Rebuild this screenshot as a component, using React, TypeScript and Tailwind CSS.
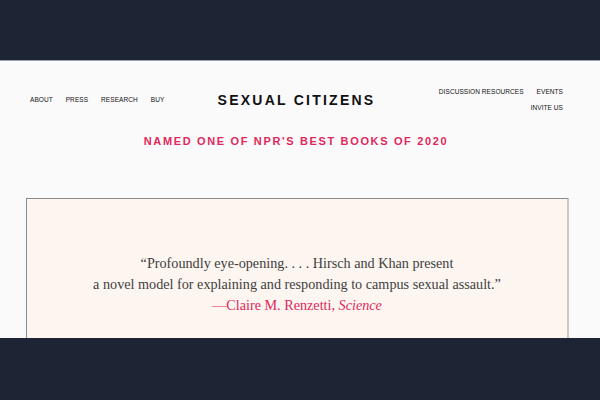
export default function App() {
  return (
    <div className="flex h-[400px] w-[600px] flex-col overflow-hidden bg-[#1d2535]">
      <div className="h-[60px] shrink-0" />
      <div className="h-[278px] shrink-0 border-t border-[#9aa0ab] bg-[#fafafa]">
        <header className="grid grid-cols-[1fr_auto_1fr] items-start pl-[30px] pr-[37px] pt-[26px] font-['Liberation_Sans',sans-serif]">
          <nav className="flex gap-[13px] pt-[8px] text-[6.5px] tracking-[0.01em] text-[#111]">
            <span>ABOUT</span>
            <span>PRESS</span>
            <span>RESEARCH</span>
            <span>BUY</span>
          </nav>
          <div className="pt-[3px] text-[14px] font-bold tracking-[0.16em] text-[#111]">
            SEXUAL CITIZENS
          </div>
          <nav className="flex flex-col items-end gap-[6px] text-[6.5px] tracking-[0.01em] text-[#111]">
            <div className="flex gap-[13px]">
              <span>DISCUSSION RESOURCES</span>
              <span>EVENTS</span>
            </div>
            <span>INVITE US</span>
          </nav>
        </header>
        <div className="mr-[8px] mt-[20px] text-center font-['Liberation_Sans',sans-serif] text-[11px] font-bold tracking-[0.15em] text-[#e0285c]">
          NAMED ONE OF NPR'S BEST BOOKS OF 2020
        </div>
        <div className="ml-[26px] mt-[49px] h-[140px] w-[543px] border-l border-t border-r-2 border-[#8a8a8a] border-r-[#c8c8c8] bg-[#fcf5f0] pt-[54px] text-center font-['Liberation_Serif',serif] text-[14.2px] leading-[21px] text-[#3f3f3f]">
          <p>“Profoundly eye-opening. . . . Hirsch and Khan present</p>
          <p>a novel model for explaining and responding to campus sexual assault.”</p>
          <p className="text-[#e0285c]">
            —Claire M. Renzetti, <i>Science</i>
          </p>
        </div>
      </div>
    </div>
  )
}
